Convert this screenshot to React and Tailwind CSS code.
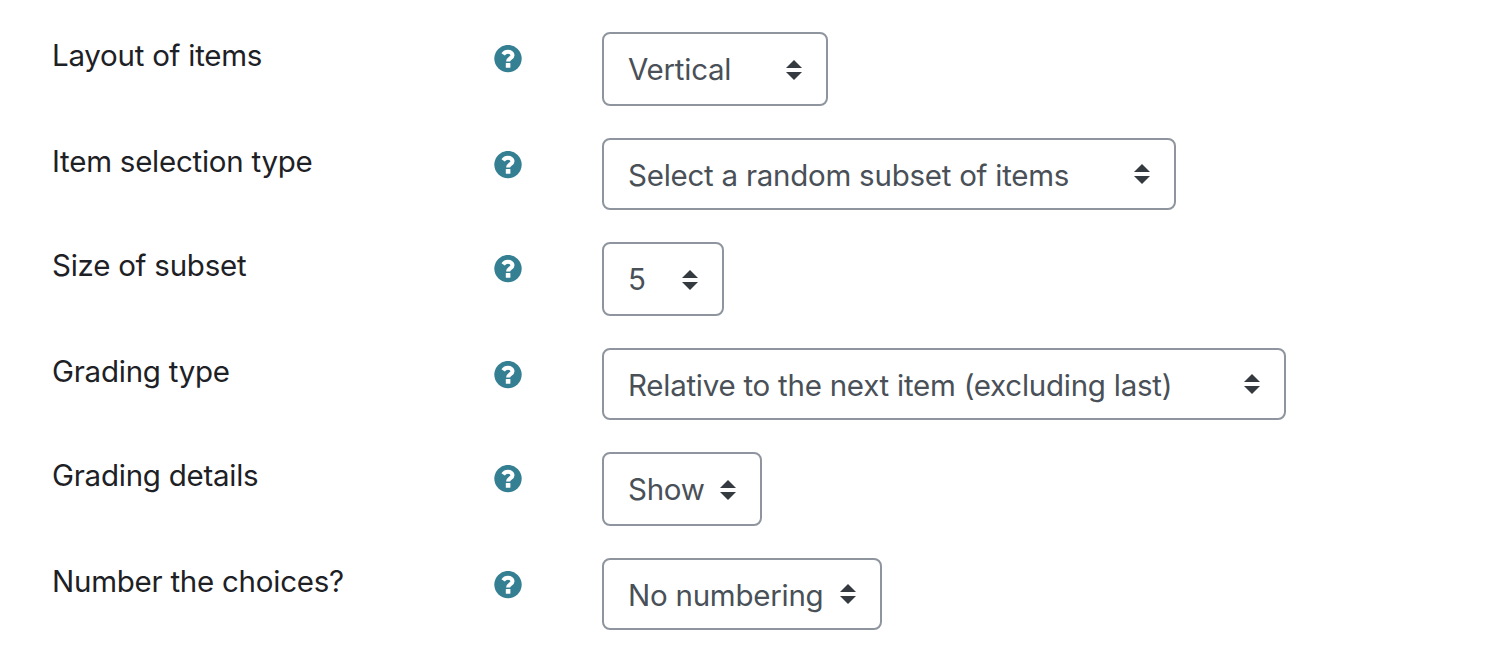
const rows = [
  {
    label: "Layout of items",
    value: "Vertical",
    row: "h-[74px]",
    box: "w-[226px]",
    arrows: "mt-0",
  },
  {
    label: "Item selection type",
    value: "Select a random subset of items",
    row: "h-[72px]",
    box: "w-[574px]",
    arrows: "-mt-1",
  },
  {
    label: "Size of subset",
    value: "5",
    row: "h-[74px]",
    box: "w-[122px]",
    arrows: "mt-0",
  },
  {
    label: "Grading type",
    value: "Relative to the next item (excluding last)",
    row: "h-[72px]",
    box: "w-[684px]",
    arrows: "-mt-1",
  },
  {
    label: "Grading details",
    value: "Show",
    row: "h-[74px]",
    box: "w-[160px]",
    arrows: "mt-0",
  },
  {
    label: "Number the choices?",
    value: "No numbering",
    row: "h-[72px]",
    box: "w-[280px]",
    arrows: "-mt-1",
  },
];

function HelpIcon() {
  return (
    <svg viewBox="0 0 28 28" className="h-7 w-7">
      <circle cx="14" cy="13.6" r="13.7" fill="currentColor" />
      <path
        d="M9.1 9.4C10.3 7.7 11.9 6.8 13.9 6.8c2.7 0 4.6 1.5 4.6 3.5 0 2.8-4.4 2.8-4.4 6.2"
        fill="none"
        stroke="#fff"
        strokeWidth="4.1"
      />
      <rect x="11.8" y="18.1" width="4.6" height="4.6" rx="0.5" fill="#fff" />
    </svg>
  );
}

function Arrows({ className }) {
  return (
    <svg viewBox="0 0 4 5" className={`h-5 w-4 ${className}`} fill="#343a40">
      <path d="M2 0L0 2h4zm0 5L0 3h4z" />
    </svg>
  );
}

export default function App() {
  return (
    <form className="flex h-[658px] w-[1510px] flex-col gap-8 overflow-hidden bg-white pt-8 pl-[52px] font-['Inter',sans-serif] text-[29.5px] tracking-[-0.25px]">
      {rows.map((r) => (
        <div key={r.label} className={`flex shrink-0 items-start ${r.row}`}>
          <label className="w-[442px] pt-px leading-[45px] whitespace-nowrap text-[#1d2125]">
            {r.label}
          </label>
          <button type="button" className="mt-[13px] w-[108px] text-[#357f92]">
            <HelpIcon />
          </button>
          <button
            type="button"
            className={`flex h-full items-start justify-between rounded-lg border-2 border-[#8f959e] bg-white pr-6 pl-6 text-[#495057] ${r.box}`}
          >
            <span className="pt-[13px] leading-[45px] whitespace-nowrap">
              {r.value}
            </span>
            <span className="flex h-[72px] items-center">
              <Arrows className={r.arrows} />
            </span>
          </button>
        </div>
      ))}
    </form>
  );
}
